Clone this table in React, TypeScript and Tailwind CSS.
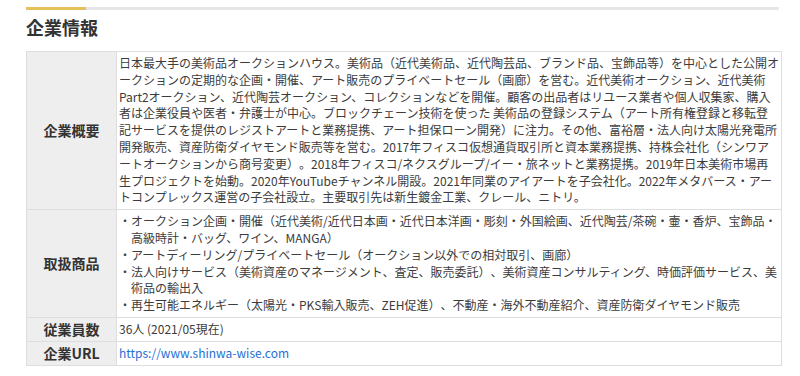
const overview =
  "日本最大手の美術品オークションハウス。美術品（近代美術品、近代陶芸品、ブランド品、宝飾品等）を中心とした公開オークションの定期的な企画・開催、アート販売のプライベートセール（画廊）を営む。近代美術オークション、近代美術Part2オークション、近代陶芸オークション、コレクションなどを開催。顧客の出品者はリユース業者や個人収集家、購入者は企業役員や医者・弁護士が中心。ブロックチェーン技術を使った 美術品の登録システム（アート所有権登録と移転登記サービスを提供のレジストアートと業務提携、アート担保ローン開発）に注力。その他、富裕層・法人向け太陽光発電所開発販売、資産防衛ダイヤモンド販売等を営む。2017年フィスコ仮想通貨取引所と資本業務提携、持株会社化（シンワアートオークションから商号変更）。2018年フィスコ/ネクスグループ/イー・旅ネットと業務提携。2019年日本美術市場再生プロジェクトを始動。2020年YouTubeチャンネル開設。2021年同業のアイアートを子会社化。2022年メタバース・アートコンプレックス運営の子会社設立。主要取引先は新生鍍金工業、クレール、ニトリ。";

const products = [
  "オークション企画・開催（近代美術/近代日本画・近代日本洋画・彫刻・外国絵画、近代陶芸/茶碗・壷・香炉、宝飾品・高級時計・バッグ、ワイン、MANGA）",
  "アートディーリング/プライベートセール（オークション以外での相対取引、画廊）",
  "法人向けサービス（美術資産のマネージメント、査定、販売委託）、美術資産コンサルティング、時価評価サービス、美術品の輸出入",
  "再生可能エネルギー（太陽光・PKS輸入販売、ZEH促進）、不動産・海外不動産紹介、資産防衛ダイヤモンド販売",
];

function HeadCell({ children }: { children: React.ReactNode }) {
  return (
    <th className="w-[90px] min-w-[90px] border border-[#dedede] bg-[#eeeeee] text-center align-middle text-[14px] font-bold text-[#333]">
      {children}
    </th>
  );
}

function BodyCell({ children }: { children: React.ReactNode }) {
  return (
    <td className="border border-[#dedede] bg-white py-[3px] pl-[2px] pr-[2px] align-top text-[12px] leading-[1.4] text-[#3c3c3c] [text-spacing-trim:space-all]">
      <div className="w-[660px]">{children}</div>
    </td>
  );
}

export default function App() {
  return (
    <div
      className="min-h-[376px] w-[800px] bg-white pl-[26px] pt-[7px]"
      style={{ fontFamily: '"Noto Sans CJK JP", "Noto Sans", sans-serif' }}
    >
      <div className="flex h-[3px] w-[753px] bg-[#e6e6e6]">
        <div className="h-full w-[60px] bg-[#e5c259]" />
      </div>
      <h2 className="mt-[4px] text-[18px] font-bold leading-[26px] text-[#333]">企業情報</h2>
      <table className="mt-[11px] border-collapse">
        <tbody>
          <tr>
            <HeadCell>企業概要</HeadCell>
            <BodyCell>{overview}</BodyCell>
          </tr>
          <tr>
            <HeadCell>取扱商品</HeadCell>
            <BodyCell>
              <ul>
                {products.map((p) => (
                  <li key={p} className="pl-[1em] -indent-[1em]">
                    ・{p}
                  </li>
                ))}
              </ul>
            </BodyCell>
          </tr>
          <tr>
            <HeadCell>従業員数</HeadCell>
            <BodyCell>36人 (2021/05現在)</BodyCell>
          </tr>
          <tr>
            <HeadCell>企業URL</HeadCell>
            <BodyCell>
              <a href="#" className="text-[#1f6fd6]">
                https://www.shinwa-wise.com
              </a>
            </BodyCell>
          </tr>
        </tbody>
      </table>
    </div>
  );
}
